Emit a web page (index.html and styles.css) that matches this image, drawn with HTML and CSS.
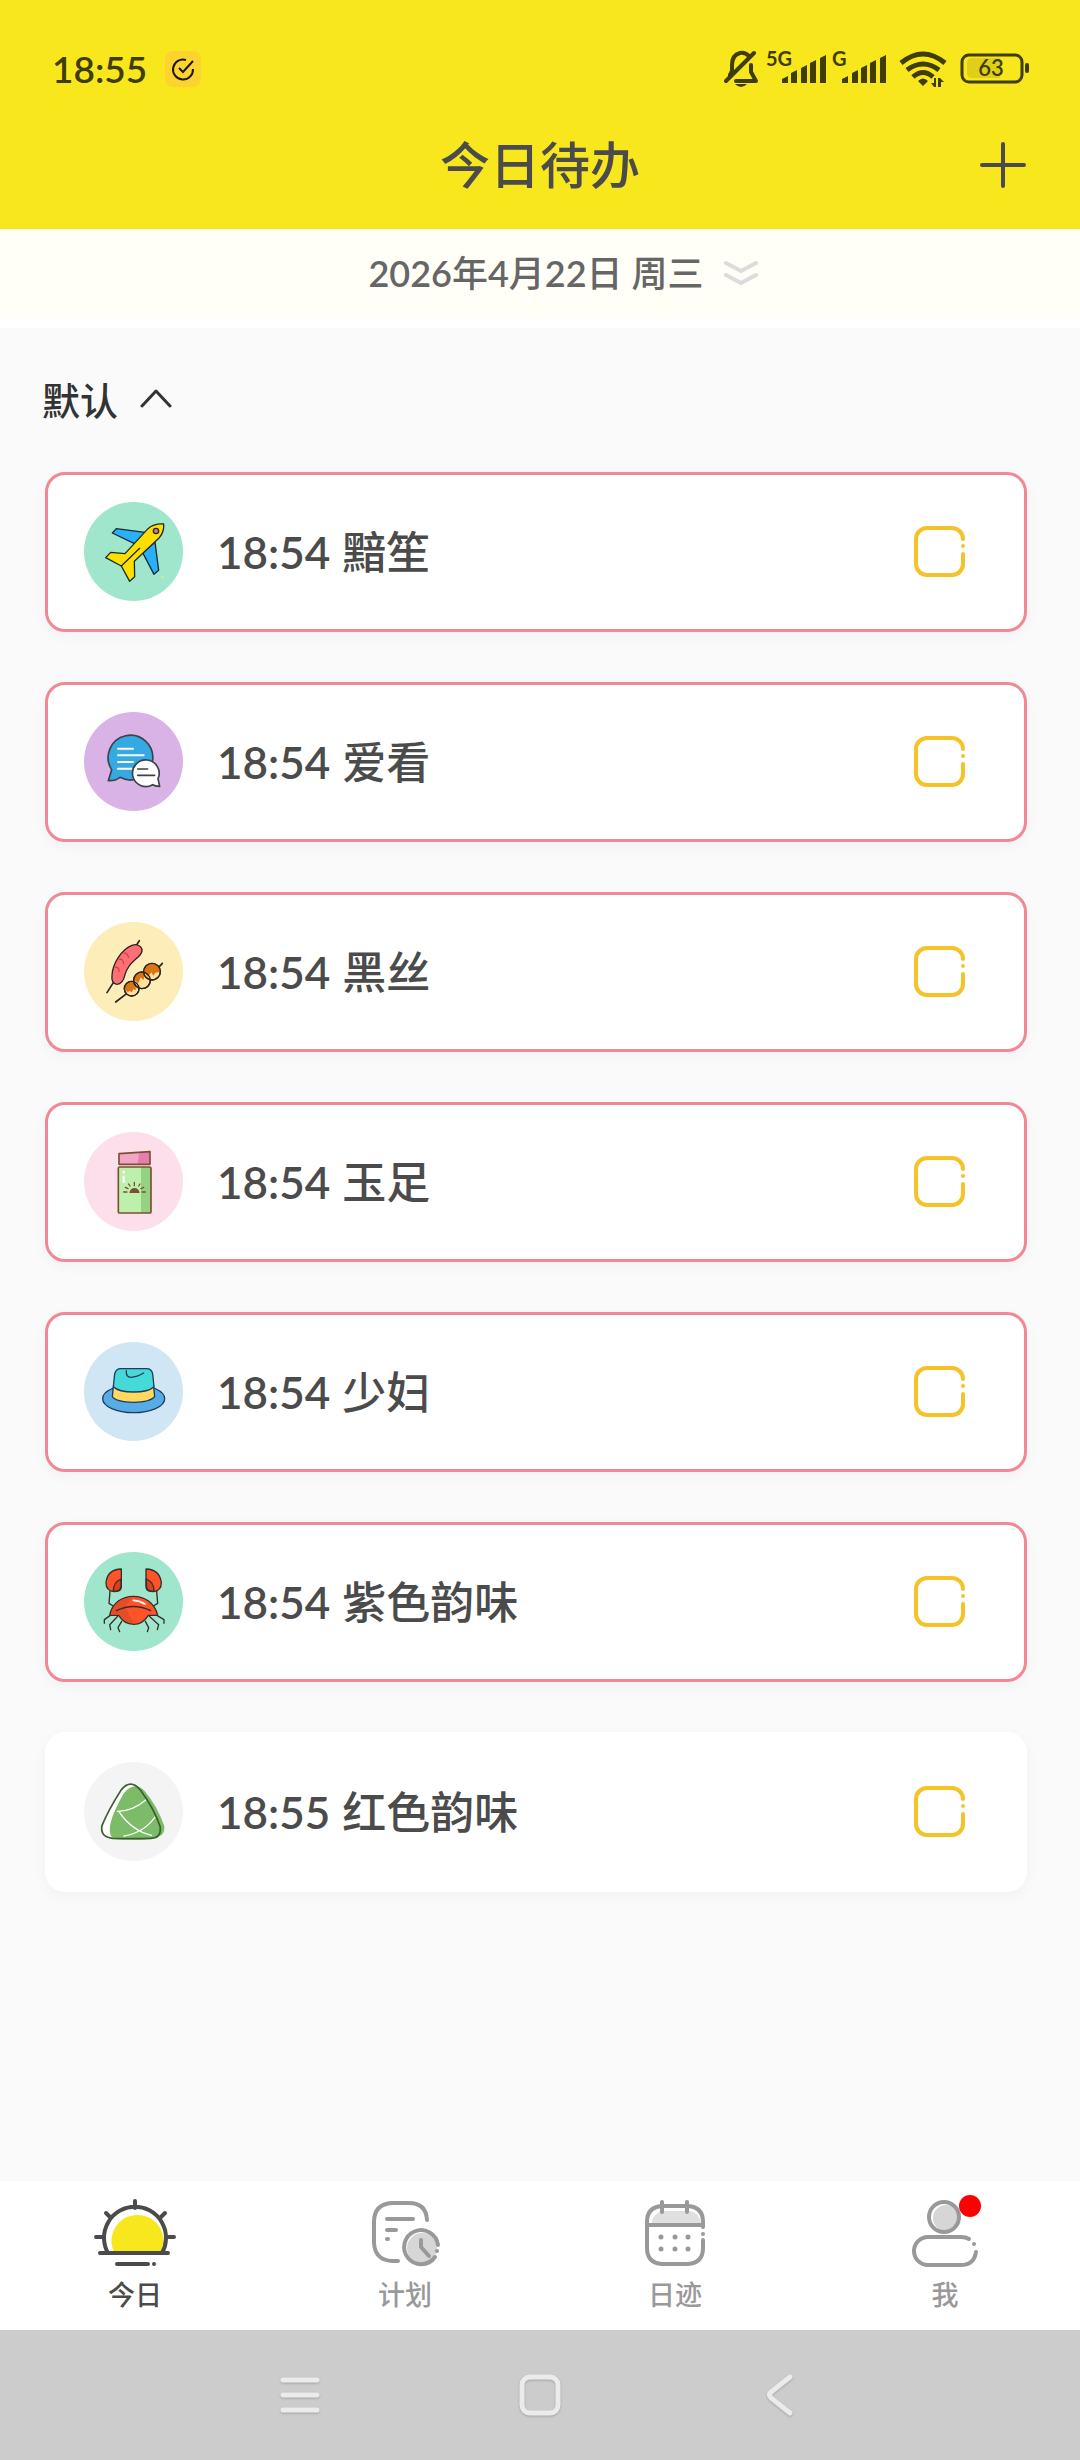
FILE: index.html
```html
<!DOCTYPE html>
<html lang="zh-CN">
<head>
<meta charset="utf-8">
<meta name="viewport" content="width=device-width, initial-scale=1">
<title>今日待办</title>
<link rel="stylesheet" href="styles.css">
</head>
<body>
<header class="header">
  <div class="status">
    <time class="clock">18:55</time>
    <svg class="app-badge" viewBox="0 0 36 36" aria-hidden="true"><rect width="36" height="36" rx="8" fill="#fdd32f"/><path d="M21 9A10 10 0 1 0 28 18M14 17L18 21L28 10" fill="none" stroke="#1c1700" stroke-width="2"/></svg>
    <div class="status-icons">
      <svg class="bell" viewBox="0 0 36 38" aria-hidden="true"><g fill="none" stroke="#403d00" stroke-width="4" stroke-linecap="round" stroke-linejoin="round"><path d="M25 6Q21 2 16 3Q8 5 8 15V21L6 25M12 31H32L27 22V15"/><path d="M2 31L30 3"/></g><path d="M11 34H23Q17 40 11 34Z" fill="#403d00"/></svg>
      <svg class="signal signal-5g" viewBox="0 -6 62 50" role="img" aria-label="5G"><text x="0" y="16" class="net">5G</text><path d="M16 33V29L22 26V33ZM25 33V23L31 20V33ZM35 33V18L41 15V33ZM44 33V13L50 10V33ZM54 33V8L60 5V33Z"/></svg>
      <svg class="signal signal-g" viewBox="0 -6 56 50" role="img" aria-label="G"><text x="0" y="16" class="net">G</text><path d="M10 33V29L16 26V33ZM20 33V23L26 20V33ZM29 33V18L35 15V33ZM38 33V13L44 10V33ZM48 33V8L54 5V33Z"/></svg>
      <svg class="wifi" viewBox="0 0 50 38" aria-hidden="true"><g fill="none" stroke="#403d00" stroke-width="5"><path d="M2 13Q24 -5 46 13"/><path d="M8 20Q24 8 40 20"/><path d="M14 27Q24 18 34 27"/></g><path d="M19 31Q24 26 29 31L24 36ZM37 28V37H35L32 33H35V28ZM39 37V28H41L45 32H42V37Z"/></svg>
      <svg class="battery" viewBox="0 0 70 38" role="img" aria-label="63%"><path d="M12 8H40V28H12Q7 28 7 23V13Q7 8 12 8Z" fill="#dfcf18"/><rect x="2" y="5" width="60" height="27" rx="7" fill="none" stroke="#403d00" stroke-width="3"/><rect x="65" y="13" width="4" height="10" rx="2"/><text x="31" y="26" text-anchor="middle" class="level">63</text></svg>
    </div>
  </div>
  <div class="title-bar">
    <h1 class="title">今日待办</h1>
    <button class="add" type="button" aria-label="添加"><svg viewBox="0 0 46 46"><path d="M23 2V44M2 23H44"/></svg></button>
  </div>
</header>

<button class="date-bar" type="button">
  <span>2026年4月22日 周三</span>
  <svg class="expand" viewBox="0 0 34 24" aria-hidden="true"><path d="M2 2L17 10L32 2M2 14L17 22L32 14"/></svg>
</button>

<main class="content">
  <button class="group" type="button">
    <span>默认</span>
    <svg class="fold" viewBox="0 0 32 20" aria-hidden="true"><path d="M2 18L16 3L30 18"/></svg>
  </button>

  <ul class="todos">
    <li class="card due">
      <svg class="pic mint" viewBox="162 126 297 297" aria-hidden="true">
        <g stroke="#1d2a2c" stroke-width="4" stroke-linejoin="round" stroke-linecap="round">
          <path fill="#27b0fb" d="M247 219L259 206L345 217L318 253ZM375 246L386 331L372 343L338 278Z"/>
          <path fill="#ffdf00" d="M227 293L242 277L285 281L354 206Q372 190 401 192Q403 215 388 233L313 304L314 350L299 364L274 318Z"/>
          <path d="M274 318L329 265"/><circle cx="378" cy="213" r="8" fill="#d9777a"/>
        </g><circle cx="397" cy="352" r="4" fill="#cdec9c"/>
      </svg>
      <label class="text" for="t1"><time>18:54</time><span>黯笙</span></label>
      <span class="check"><input id="t1" type="checkbox"><svg viewBox="0 0 51 51" aria-hidden="true"><path d="M49 13A11 11 0 0 0 38 2H13A11 11 0 0 0 2 13V38A11 11 0 0 0 13 49H38A11 11 0 0 0 49 38V28M49 20V20"/></svg></span>
    </li>
    <li class="card due">
      <svg class="pic purple" viewBox="162 756 297 297" aria-hidden="true">
        <g stroke="#3b424c" stroke-width="5" stroke-linejoin="round" stroke-linecap="round">
          <path fill="#35a9e1" d="M245 929L235 962Q256 963 270 952A67 67 0 1 0 245 929Z"/>
          <path stroke="#fff" stroke-width="6" fill="none" d="M264 866H309M264 886H341M264 906H309M264 926H305"/>
          <path fill="#fff" d="M384 956L389 979Q374 979 368 974A40 40 0 1 1 384 956Z"/>
          <path fill="none" d="M323 927H353M323 946H374"/>
        </g>
      </svg>
      <label class="text" for="t2"><time>18:54</time><span>爱看</span></label>
      <span class="check"><input id="t2" type="checkbox"><svg viewBox="0 0 51 51" aria-hidden="true"><path d="M49 13A11 11 0 0 0 38 2H13A11 11 0 0 0 2 13V38A11 11 0 0 0 13 49H38A11 11 0 0 0 49 38V28M49 20V20"/></svg></span>
    </li>
    <li class="card due">
      <svg class="pic cream" viewBox="162 126 297 297" aria-hidden="true">
        <g stroke="#2b2620" stroke-width="4" stroke-linejoin="round" stroke-linecap="round" fill="none">
          <path stroke-width="5" d="M231 338L250 308M320 194L328 182M257 366L290 341M386 262L397 250"/>
          <path fill="#ff6f76" d="M246 286C248 250 276 207 306 196C328 188 345 207 330 225C316 242 294 250 285 284C280 306 272 313 261 313C249 312 244 301 246 286Z"/>
          <path stroke="#e23b49" d="M257 262Q266 260 267 274M269 238Q280 236 281 251M283 219Q292 218 296 233"/>
          <circle cx="305" cy="326" r="22" fill="#ffdf9b"/><path stroke="none" fill="#dd7410" d="M285 328Q283 306 305 306L315 309L318 330L309 328L306 337L300 333L292 336Z"/>
          <circle cx="336" cy="301" r="25" fill="#ffdf9b"/><path stroke="none" fill="#dd7410" d="M313 300Q313 280 334 278L347 281L340 300L332 292L325 309Z"/>
          <circle cx="366" cy="275" r="25" fill="#ffdf9b"/><path stroke="none" fill="#dd7410" d="M343 278Q343 252 366 252Q390 254 389 276L376 278L370 287L364 277L353 290Z"/>
          <circle cx="305" cy="326" r="22"/><circle cx="336" cy="301" r="25"/><circle cx="366" cy="275" r="25"/>
        </g>
      </svg>
      <label class="text" for="t3"><time>18:54</time><span>黑丝</span></label>
      <span class="check"><input id="t3" type="checkbox"><svg viewBox="0 0 51 51" aria-hidden="true"><path d="M49 13A11 11 0 0 0 38 2H13A11 11 0 0 0 2 13V38A11 11 0 0 0 13 49H38A11 11 0 0 0 49 38V28M49 20V20"/></svg></span>
    </li>
    <li class="card due">
      <svg class="pic pink" viewBox="162 756 297 297" aria-hidden="true">
        <path fill="#f2a5c5" d="M267 821L360 815V853H267Z"/><path fill="#e67eac" d="M328 817L360 815V853H322Z"/>
        <rect x="265" y="861" width="98" height="138" fill="#bdf0aa"/><path fill="#94d281" d="M333 861H363V999H333Z"/>
        <g fill="none" stroke="#7a5134" stroke-width="5" stroke-linejoin="round" stroke-linecap="round">
          <path d="M267 821L360 815V853H267Z"/><rect x="265" y="861" width="98" height="138" rx="4"/>
          <path stroke-width="4" d="M281 936H291M336 936H346M286 922L294 926M341 922L333 926M296 912L300 918M330 912L326 918M313 907V917"/>
        </g>
        <path fill="#7a5134" d="M298 939Q301 924 313 924Q326 924 329 939Z"/>
        <path stroke="#fff" stroke-width="7" stroke-linecap="round" d="M281 876V877M281 890V905"/>
      </svg>
      <label class="text" for="t4"><time>18:54</time><span>玉足</span></label>
      <span class="check"><input id="t4" type="checkbox"><svg viewBox="0 0 51 51" aria-hidden="true"><path d="M49 13A11 11 0 0 0 38 2H13A11 11 0 0 0 2 13V38A11 11 0 0 0 13 49H38A11 11 0 0 0 49 38V28M49 20V20"/></svg></span>
    </li>
    <li class="card due">
      <svg class="pic sky" viewBox="162 126 297 297" aria-hidden="true">
        <g stroke="#223a5e" stroke-width="4" stroke-linejoin="round" stroke-linecap="round">
          <ellipse cx="311" cy="296" rx="93" ry="42" fill="#56ade6"/>
          <path fill="#ffda5e" d="M250 260L247 290Q258 306 311 307Q362 306 374 290L371 260Z"/>
          <path fill="#45dad7" d="M250 260L254 222Q258 206 272 206H350Q365 206 368 222L372 260Q355 276 311 276Q266 276 250 260Z"/>
          <path fill="none" d="M289 212Q287 232 303 232Q321 231 341 219"/>
        </g>
      </svg>
      <label class="text" for="t5"><time>18:54</time><span>少妇</span></label>
      <span class="check"><input id="t5" type="checkbox"><svg viewBox="0 0 51 51" aria-hidden="true"><path d="M49 13A11 11 0 0 0 38 2H13A11 11 0 0 0 2 13V38A11 11 0 0 0 13 49H38A11 11 0 0 0 49 38V28M49 20V20"/></svg></span>
    </li>
    <li class="card due">
      <svg class="pic mint" viewBox="162 756 297 297" aria-hidden="true">
        <g stroke="#33302c" stroke-width="4" stroke-linejoin="round" stroke-linecap="round" fill="none">
          <path d="M240 874L237 910L250 918M380 874L383 910L370 918M240 947L223 959V970M263 949L239 974L242 989M275 964L264 983L269 995M382 947L402 959V970M358 949L386 974L382 989M346 964L356 983L352 995"/>
          <path fill="#ff5429" d="M274 807V862Q272 875 252 875Q228 872 228 848Q232 808 274 807ZM348 807V862Q350 875 370 875Q394 872 394 848Q389 808 348 807Z"/>
          <path fill="#d9401f" d="M273 837Q250 846 250 873Q272 876 273 858ZM349 837Q372 846 372 873Q350 876 349 858Z"/>
          <path fill="#ff5429" d="M239 946C246 908 278 889 310 889C343 889 374 908 383 946H355Q338 973 311 973Q282 972 266 946Z"/>
          <path stroke="none" fill="#e94b26" d="M243 943C250 910 279 892 307 892Q292 910 285 922Q302 950 311 970Q284 970 268 943Z"/>
          <path d="M259 932Q311 907 362 932"/><path stroke="#fff" stroke-width="5" d="M310 901Q328 902 345 912"/>
        </g>
      </svg>
      <label class="text" for="t6"><time>18:54</time><span>紫色韵味</span></label>
      <span class="check"><input id="t6" type="checkbox"><svg viewBox="0 0 51 51" aria-hidden="true"><path d="M49 13A11 11 0 0 0 38 2H13A11 11 0 0 0 2 13V38A11 11 0 0 0 13 49H38A11 11 0 0 0 49 38V28M49 20V20"/></svg></span>
    </li>
    <li class="card">
      <svg class="pic gray" viewBox="0 0 297 297" aria-hidden="true">
        <g transform="scale(1.035 1) translate(-157 -155)" fill="none" stroke-linecap="round">
          <path fill="#fff" d="M264 240Q292 203 321 240Q361 296 378 350Q381 383 352 384H240Q203 380 209 346Q227 300 264 240Z"/>
          <path fill="#7cbb67" d="M273 248Q302 212 331 240Q369 286 390 348Q392 373 372 380Q355 391 252 387Q228 384 232 351Q236 313 273 248Z"/>
          <path stroke="#fff" stroke-width="4" d="M254 303Q299 302 337 268M258 303Q295 361 353 375M363 320Q332 366 273 377"/>
          <path stroke="#3c5f31" stroke-width="5" d="M264 240Q292 203 321 240Q361 296 378 350Q381 383 352 384Q300 386 240 384Q203 380 209 346Q227 300 264 240Z"/>
        </g>
      </svg>
      <label class="text" for="t7"><time>18:55</time><span>红色韵味</span></label>
      <span class="check"><input id="t7" type="checkbox"><svg viewBox="0 0 51 51" aria-hidden="true"><path d="M49 13A11 11 0 0 0 38 2H13A11 11 0 0 0 2 13V38A11 11 0 0 0 13 49H38A11 11 0 0 0 49 38V28M49 20V20"/></svg></span>
    </li>
  </ul>
</main>

<nav class="tabs" aria-label="主导航">
  <a class="tab active" href="#today">
    <svg viewBox="0 0 90 76" aria-hidden="true"><path class="fill" d="M24 59A26 26 0 1 1 71 59Z"/><path d="M18 60A31 31 0 1 1 72 60M45 8V15M16 20L21 25M75 20L70 25M6 44H14M76 44H84M10 60H78M27 71H58M64 71V71"/></svg>
    <span>今日</span>
  </a>
  <a class="tab" href="#plan">
    <svg viewBox="0 0 90 76" aria-hidden="true"><circle class="fill" cx="62" cy="55" r="15"/><path d="M67 27Q66 10 49 10H32Q14 11 14 29V50Q15 67 32 68H38M27 26H53M27 37H36M27 46H28M78 52A17 17 0 1 0 75 64M77 58V58M61 47V54L69 63"/></svg>
    <span>计划</span>
  </a>
  <a class="tab" href="#diary">
    <svg viewBox="0 0 90 76" aria-hidden="true"><path class="fill light" d="M21 31Q24 18 36 18H60Q70 20 71 31Z"/><path d="M73 34V29Q73 14 58 13H32Q17 14 17 29V55Q17 70 32 71H58Q73 70 73 55V47M73 41V41M17 32H73M32 9V19M57 9V19"/><path class="dots" d="M31 44V44M45 44V44M58 44V44M31 56V56M45 56V56M58 56V56"/></svg>
    <span>日迹</span>
  </a>
  <a class="tab" href="#me">
    <svg viewBox="0 0 90 76" aria-hidden="true"><circle class="fill" cx="46" cy="25" r="13"/><circle class="ring" cx="44" cy="24" r="15"/><path d="M69 46Q66 44 61 44H28A14 14 0 0 0 28 72H61Q74 72 76 59M74 51V51"/><circle class="alert" cx="70" cy="13" r="11"/></svg>
    <span>我</span>
  </a>
</nav>

<div class="system-nav">
  <button type="button" aria-label="最近任务"><svg viewBox="0 0 42 46"><path d="M4 8H38M4 23H38M4 38H38"/></svg></button>
  <button type="button" aria-label="主屏幕"><svg viewBox="0 0 42 46"><rect x="3" y="5" width="36" height="36" rx="8"/></svg></button>
  <button type="button" aria-label="返回"><svg viewBox="0 0 42 46"><path d="M31 5L12 20Q9 23 12 26L31 41"/></svg></button>
</div>
</body>
</html>
```
FILE: styles.css
```css
* { box-sizing: border-box; }

body {
  margin: 0;
  min-height: 100vh;
  display: flex;
  flex-direction: column;
  background: #fafafa;
  color: #4b4b4b;
  font-family: "Lato Semibold", Lato, "Noto Sans CJK SC", sans-serif;
  font-weight: 500;
}

button {
  border: 0;
  padding: 0;
  background: none;
  color: inherit;
  font: inherit;
  cursor: pointer;
}

svg { display: block; flex: none; }

/* Header */
.header { background: #f8e71c; }

.status {
  display: flex;
  align-items: center;
  height: 88px;
  padding: 50px 50px 0 52px;
  color: #403d00;
}
.clock { font-size: 37px; line-height: 38px; }
.app-badge { width: 36px; height: 36px; margin-left: 18px; }
.status-icons { display: flex; align-items: center; height: 38px; margin-left: auto; fill: #403d00; }
.status-icons svg { height: 38px; }
.status-icons .signal { height: 50px; }
.bell { width: 36px; margin-right: 6px; }
.signal-5g { width: 62px; margin-right: 4px; }
.signal-g { width: 56px; margin-right: 11px; }
.wifi { width: 50px; margin-right: 11px; }
.battery { width: 70px; }
.net { font-family: Lato, sans-serif; font-size: 20px; font-weight: 700; }
.level { font-size: 22px; }

.title-bar {
  display: grid;
  grid-template-columns: 1fr auto 1fr;
  align-items: center;
  height: 141px;
  padding: 13px 54px 0;
}
.title { grid-column: 2; margin: 0; font-size: 50px; line-height: 72px; font-weight: 500; }
.add { justify-self: end; }
.add svg { width: 46px; height: 46px; fill: none; stroke: #4b4b4b; stroke-width: 4; stroke-linecap: round; }

/* Date switcher */
.date-bar {
  display: flex;
  align-items: center;
  justify-content: center;
  gap: 20px;
  height: 99px;
  padding: 0 0 2px 46px;
  border-bottom: 10px solid #fff;
  background: #fffff7;
  color: #666;
  font-size: 36px;
  line-height: 52px;
}
.expand { width: 34px; height: 24px; fill: none; stroke: #dcdcdc; stroke-width: 4; stroke-linecap: round; stroke-linejoin: round; }

/* List */
.content { flex: 1; padding: 42px 53px 50px 45px; }
.group {
  display: flex;
  align-items: center;
  gap: 22px;
  height: 56px;
  margin-left: -3px;
  color: #333;
  font-size: 38px;
}
.fold { width: 32px; height: 20px; fill: none; stroke: #333; stroke-width: 3; stroke-linecap: round; stroke-linejoin: round; }

.todos {
  display: flex;
  flex-direction: column;
  gap: 50px;
  margin: 46px 0 0;
  padding: 0;
  list-style: none;
}
.card {
  display: flex;
  align-items: center;
  height: 160px;
  padding: 0 59px 1px 36px;
  border: 3px solid #fff;
  border-radius: 20px;
  background: #fff;
  box-shadow: 0 4px 14px rgba(0, 0, 0, 0.04);
}
.due { border-color: #f08896; }

.pic { width: 99px; height: 99px; border-radius: 50%; }
.mint { background: #a0e6cc; }
.purple { background: #d9b2e6; }
.cream { background: #fdedb8; }
.pink { background: #fcdfea; }
.sky { background: #d0e6f5; }
.gray { background: #f4f4f4; }

.text {
  display: flex;
  flex: 1;
  align-items: baseline;
  gap: 12px;
  margin-left: 34px;
  font-size: 44px;
  line-height: 64px;
}

.check { display: grid; width: 51px; height: 51px; }
.check > * { grid-area: 1 / 1; width: 51px; height: 51px; margin: 0; }
.check input { appearance: none; cursor: pointer; }
.check svg { fill: none; stroke: #f5c327; stroke-width: 4; stroke-linecap: round; pointer-events: none; }
.check input:checked + svg { fill: #f5c327; }

/* Tab bar */
.tabs { display: grid; grid-template-columns: repeat(4, 1fr); height: 149px; background: #fff; }
.tab {
  display: flex;
  flex-direction: column;
  align-items: center;
  gap: 6px;
  padding-top: 12px;
  color: #999;
  font-size: 27px;
  line-height: 40px;
  text-decoration: none;
}
.tab svg { width: 90px; height: 76px; fill: none; stroke: #999; stroke-width: 4; stroke-linecap: round; stroke-linejoin: round; }
.tab .fill { fill: #d6d6d6; stroke: none; }
.tab .light { fill: #e0e0e0; }
.tab .dots { stroke-width: 5; }
.tab .alert { fill: #f00; stroke: none; }
.active { color: #4b4b4b; }
.tab.active svg { stroke: #4b4b4b; }
.tab.active .fill { fill: #f8e71c; }

/* System navigation */
.system-nav {
  display: grid;
  grid-template-columns: repeat(3, 1fr);
  height: 130px;
  padding: 0 16.6667%;
  background: #ccc;
}
.system-nav button { display: grid; place-items: center; }
.system-nav svg {
  width: 42px;
  height: 46px;
  fill: none;
  stroke: #ebebeb;
  stroke-width: 5;
  stroke-linecap: round;
  filter: drop-shadow(0 1px 1px rgba(0, 0, 0, 0.2));
}
```
